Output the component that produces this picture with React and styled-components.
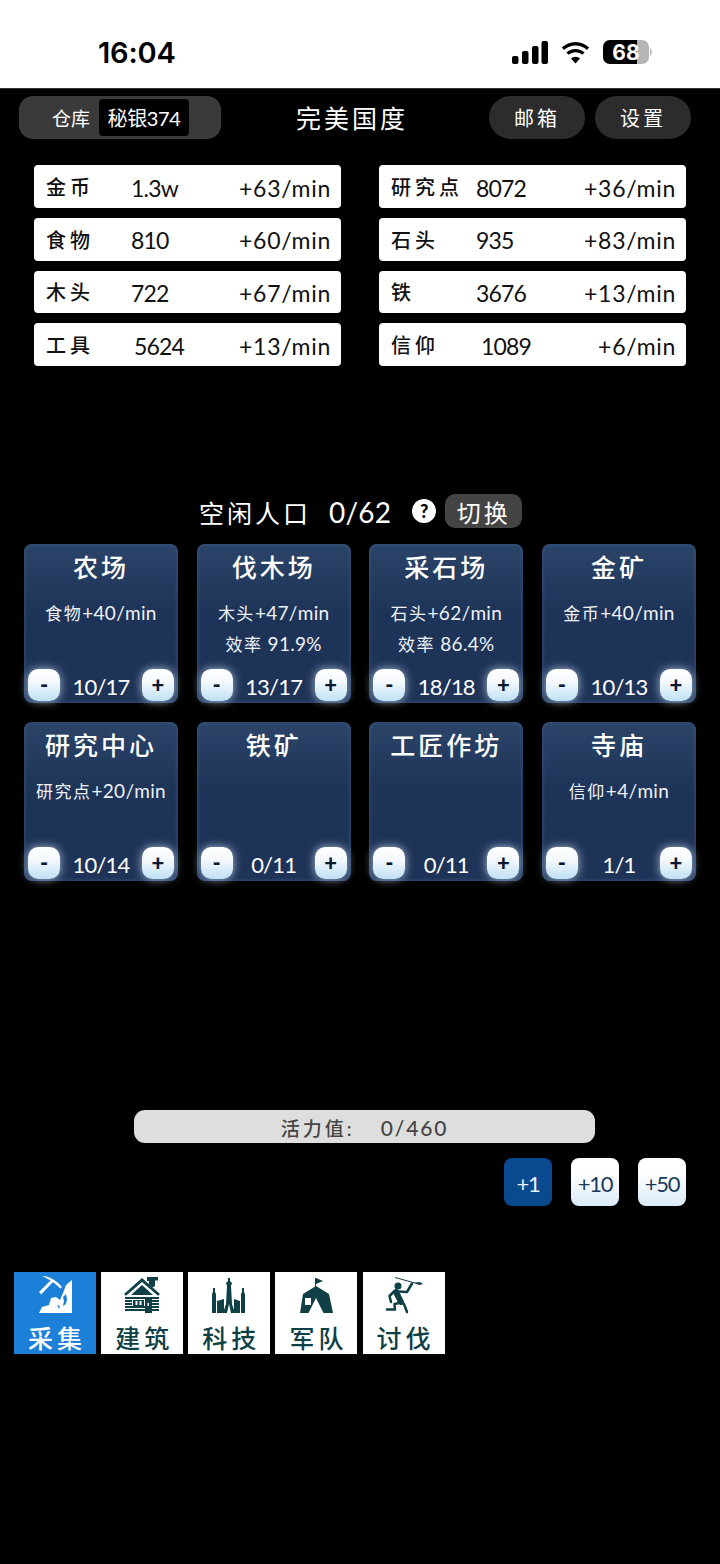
import styled, { createGlobalStyle } from 'styled-components';

const CJK = `'Lato', 'Noto Sans CJK SC', sans-serif`;

const GlobalStyle = createGlobalStyle`
  html, body {
    margin: 0;
    padding: 0;
    background: #000;
  }
  * {
    box-sizing: border-box;
  }
  #root {
    width: 720px;
    height: 1564px;
    overflow: hidden;
  }
`;

const Page = styled.div`
  width: 720px;
  height: 1564px;
  background: #000;
  font-family: ${CJK};
  color: #fff;
`;

const StatusBar = styled.div`
  height: 88px;
  background: #fff;
  color: #000;
  display: flex;
  align-items: center;
  justify-content: space-between;
  padding: 16px 68px 0 98px;
`;

const Clock = styled.div`
  font-family: 'Inter', sans-serif;
  font-size: 29px;
  font-weight: 600;
  letter-spacing: -0.2px;
`;

const StatusIcons = styled.div`
  display: flex;
  align-items: center;
  gap: 12px;
`;

const TopBar = styled.div`
  height: 50px;
  padding: 7px 29px 0 19px;
  display: flex;
  align-items: flex-start;
  justify-content: space-between;
  border-top: 1px solid #333;
`;

const Warehouse = styled.div`
  width: 202px;
  height: 43px;
  border-radius: 14px;
  background: #3a3a3a;
  display: flex;
  align-items: center;
  padding-left: 33px;
  gap: 9px;
  font-size: 19px;
`;

const Silver = styled.span`
  background: #000;
  border-radius: 4px;
  height: 37px;
  width: 90px;
  display: flex;
  align-items: center;
  justify-content: center;
  font-size: 20px;
  letter-spacing: -0.4px;
  white-space: nowrap;
`;

const KingdomName = styled.div`
  font-size: 25px;
  letter-spacing: 3px;
  line-height: 45px;
  margin-right: 6px;
`;

const TopActions = styled.div`
  display: flex;
  gap: 10px;
`;

const PillButton = styled.div`
  width: 96px;
  height: 43px;
  border-radius: 22px;
  background: #2c2c2c;
  display: flex;
  align-items: center;
  justify-content: center;
  font-size: 20px;
  letter-spacing: 3px;
`;

const ResourceGrid = styled.div`
  display: grid;
  grid-template-columns: 307px 307px;
  justify-content: space-between;
  row-gap: 10px;
  padding: 27.33px 34px 0;
`;

const ResourceRow = styled.div`
  height: 42.67px;
  background: #fff;
  border-radius: 4px;
  color: #111;
  display: flex;
  align-items: center;
  padding: 2px 10px 0 12px;
  font-size: 23px;
`;

const ResourceName = styled.span`
  font-size: 20px;
  font-weight: 500;
  letter-spacing: 4px;
  width: 85px;
  margin-top: -2px;
  white-space: nowrap;
`;

const ResourceAmount = styled.span`
  flex: 1;
  padding-left: ${({ $pad }) => $pad || 0}px;
  letter-spacing: -0.8px;
`;

const ResourceRate = styled.span`
  letter-spacing: 0.7px;
`;

const Population = styled.div`
  margin-top: 128px;
  height: 36px;
  display: flex;
  align-items: center;
  padding-left: 199px;
  font-size: 25px;
`;

const PopLabel = styled.span`
  letter-spacing: 3px;
  white-space: nowrap;
`;

const PopValue = styled.span`
  margin-left: 18px;
  font-size: 28px;
  letter-spacing: 0.2px;
`;

const HelpDot = styled.span`
  width: 24px;
  height: 24px;
  margin: -2px 0 0 21px;
  border-radius: 50%;
  background: #fff;
  color: #000;
  font-size: 18px;
  font-weight: 900;
  display: flex;
  align-items: center;
  justify-content: center;
`;

const SwitchButton = styled.span`
  width: 77px;
  height: 34px;
  margin: -1px 0 0 9px;
  border-radius: 10px;
  background: #444;
  display: flex;
  align-items: center;
  justify-content: center;
  font-size: 24px;
  letter-spacing: 3px;
`;

const BuildingGrid = styled.div`
  display: grid;
  grid-template-columns: repeat(4, 154px);
  justify-content: space-between;
  row-gap: 19px;
  padding: 14px 24px 0;
`;

const BuildingCard = styled.div`
  height: 159px;
  border-radius: 8px;
  background: linear-gradient(180deg, #2b4468 0%, #1d3358 45%, #1f3358 100%);
  box-shadow: inset 0 0 4px #3a5a85;
  display: flex;
  flex-direction: column;
  align-items: center;
  position: relative;
`;

const BuildingName = styled.div`
  font-size: 25px;
  letter-spacing: 3px;
  margin-top: 6px;
  line-height: 34px;
  font-weight: 500;
`;

const BuildingStat = styled.div`
  font-size: 19px;
  letter-spacing: 0.3px;
  line-height: 30px;
  color: #eef2f7;
  white-space: nowrap;
  ${BuildingName} + & {
    margin-top: 14px;
  }
`;

const StatSmall = styled.span`
  font-size: 17px;
  letter-spacing: 1.5px;
`;

const Stepper = styled.div`
  margin-top: auto;
  width: 100%;
  height: 32px;
  margin-bottom: 2px;
  padding: 0 4px;
  display: flex;
  align-items: center;
  justify-content: space-between;
`;

const StepCount = styled.span`
  font-size: 22px;
  letter-spacing: -0.8px;
  padding-top: 3px;
`;

const StepButton = styled.div`
  width: 32px;
  height: 32px;
  border-radius: 10px;
  background: linear-gradient(180deg, #ffffff 0%, #f4f9fd 40%, #bfe0f5 100%);
  box-shadow: 0 0 10px rgba(215, 238, 255, 0.75);
  color: #0c1830;
  font-weight: 900;
  font-size: 22px;
  display: flex;
  align-items: center;
  justify-content: center;
`;

const EnergyBar = styled.div`
  width: 461px;
  height: 33px;
  margin: 229px 0 0 134px;
  padding-top: 3px;
  border-radius: 11px;
  background: #dedede;
  color: #444;
  display: flex;
  align-items: center;
  justify-content: center;
  gap: 20px;
  font-size: 21px;
  font-weight: 500;
  white-space: nowrap;
`;

const EnergyLabel = styled.span`
  font-size: 19px;
  letter-spacing: 3px;
  width: 80px;
`;

const EnergyValue = styled.span`
  letter-spacing: 1.8px;
`;

const MultiplierRow = styled.div`
  display: flex;
  justify-content: flex-end;
  gap: 19px;
  padding: 15px 34px 0 0;
`;

const MultiplierButton = styled.div`
  width: 48px;
  height: 48px;
  padding-top: 3px;
  border-radius: 8px;
  background: ${({ $active }) =>
    $active ? 'linear-gradient(180deg, #0b4a92, #08498c)' : 'linear-gradient(180deg, #ffffff 30%, #dbebf8 100%)'};
  color: ${({ $active }) => ($active ? '#e8f1fa' : '#1d3a5c')};
  font-size: 22px;
  letter-spacing: -1.2px;
  display: flex;
  align-items: center;
  justify-content: center;
`;

const TabBar = styled.div`
  display: flex;
  gap: 5.15px;
  padding: 66px 0 0 14px;
`;

const Tab = styled.div`
  width: 82px;
  height: 82px;
  background: ${({ $active }) => ($active ? '#1c7fd8' : '#fff')};
  color: ${({ $active }) => ($active ? '#fff' : '#0f4046')};
  display: flex;
  flex-direction: column;
  align-items: center;
`;

const TabIcon = styled.svg`
  width: 40px;
  height: 40px;
  margin-top: 4px;
  fill: currentColor;
  flex: none;
`;

const TabLabel = styled.div`
  font-size: 25px;
  font-weight: 500;
  letter-spacing: 4px;
  line-height: 32px;
  margin-top: 6px;
  padding-left: 4px;
`;

const Signal = () => (
  <svg width="36" height="23" viewBox="0 0 36 23" fill="#000">
    <rect x="0" y="15" width="6.5" height="8" rx="2" />
    <rect x="10" y="10" width="6.5" height="13" rx="2" />
    <rect x="20" y="5" width="6.5" height="18" rx="2" />
    <rect x="29.5" y="0" width="6.5" height="23" rx="2" />
  </svg>
);

const Wifi = () => (
  <svg width="31" height="23" viewBox="0 0 31 23" fill="#000">
    <path d="M15.5 4.4c4.4 0 8.4 1.700 11.400 4.500l2.200-2.300C25.500 3.200 20.800 1 15.500 1S5.500 3.200 1.900 6.600l2.200 2.300c3-2.800 7-4.500 11.400-4.500z" />
    <path d="M15.500 11.200c2.600 0 5 1 6.800 2.600l2.300-2.300c-2.400-2.200-5.600-3.600-9.100-3.600s-6.700 1.400-9.100 3.600l2.300 2.300c1.800-1.600 4.200-2.600 6.800-2.600z" />
    <path d="M15.500 22.500l4.500-5c-1.200-1-2.800-1.700-4.500-1.700s-3.300.7-4.500 1.700z" />
  </svg>
);

const Battery = () => (
  <svg width="49" height="24" viewBox="0 0 49 24">
    <rect x="0" y="0" width="46" height="24" rx="7" fill="#b5b5b5" />
    <path d="M7 0h27v24H7a7 7 0 0 1-7-7V7a7 7 0 0 1 7-7z" fill="#000" />
    <path d="M47 8c1.200.5 2 2 2 4s-.8 3.500-2 4z" fill="#c4c4c4" />
    <text x="23" y="19.500" textAnchor="middle" fontFamily="Inter, sans-serif" fontSize="21" fontWeight="700" fill="#fff">
      68
    </text>
  </svg>
);

const GatherIcon = () => (
  <TabIcon viewBox="0 0 40 40">
    <path d="M4 16 17 3l2 2L6 18.500z" />
    <path d="M7 0c7 0 14 4 20 11l-1.500 1.500C20 7 14 3 7 0z" />
    <path d="M4 37l3-6 7-2 2-7 5-1 4 3 3-7 3-8 6-5v33z" />
    <path d="M28 21l3-3 1 5-1 5-3 2 1-5zM22 29l3 1-1 3z" fill="#1c7fd8" />
  </TabIcon>
);

const BuildIcon = () => (
  <TabIcon viewBox="0 0 40 40">
    <path d="M25 1h11v3.500h-3V10l-2.500 1.500L27 8.500V5h-2z" />
    <path d="M20 2 38 18l-2 1.800L20 6 4 19.800 2 18z" />
    <path d="M20 9l11 10H9zM14 14h12v1H14zM12 17h16v1H12z" />
    <path d="M3 21h34v2H3zM3 24h7v2H3zM30 24h7v2h-7zM3 27h7v2H3zM30 27h7v2h-7zM3 30h34v2H3zM3 33h34v2H3z" />
    <path d="M11 24h11v6H11zM23 23h7v14h-7z" />
    <path d="M13.500 25h2v4h-2zM17.500 25h2v4h-2zM25.500 27h1.500v3h-1.500z" fill="#fff" />
  </TabIcon>
);

const TechIcon = () => (
  <TabIcon viewBox="0 0 40 40">
    <path d="M19 2h2v3l2 2-1 3 1 18 3 9h-4l-2-9-2 9h-4l3-9 1-18-1-3 2-2z" />
    <path d="M4 12h2v4l1 2v19H3V18l1-2zM33 12h2v4l1 2v19h-4V18l1-2z" />
    <path d="M8 25l7-2v14H8zM25 23l6 2v12h-6z" />
  </TabIcon>
);

const ArmyIcon = () => (
  <TabIcon viewBox="0 0 40 40">
    <path d="M19 2h1v9h-1z" />
    <path d="M20 2l7 3-7 3z" />
    <path
      d="M20 10 33 18l4 19H27.500L20 22 12.500 37H4l3-19zM9 22v7h6v-7z"
      fillRule="evenodd"
    />
  </TabIcon>
);

const RaidIcon = () => (
  <TabIcon viewBox="0 0 40 40">
    <path d="M11 1 31 6.500l5-.5 3 2-3.500 1-4.500-1.500L11 2z" />
    <circle cx="14" cy="10" r="3.500" />
    <g fill="none" stroke="currentColor" strokeLinecap="round" strokeLinejoin="round">
      <path d="M12 16 17 26" strokeWidth="6" />
      <path d="M14 15.500 23 16 28 7.500" strokeWidth="2.500" />
      <path d="M10 15.500 5.500 20 7 26" strokeWidth="2.500" />
      <path d="M15 27 10.500 28 11 33.500 3 33.500" strokeWidth="2.500" />
      <path d="M16 26 20 28 23 36" strokeWidth="2.500" />
    </g>
  </TabIcon>
);

const resources = [
  ['金币', '1.3w', '+63/min', 0],
  ['研究点', '8072', '+36/min', 0],
  ['食物', '810', '+60/min', 0],
  ['石头', '935', '+83/min', 0],
  ['木头', '722', '+67/min', 0],
  ['铁', '3676', '+13/min', 0],
  ['工具', '5624', '+13/min', 3],
  ['信仰', '1089', '+6/min', 5],
];

const buildings = [
  { name: '农场', label: '食物', rate: '+40/min', count: '10/17' },
  { name: '伐木场', label: '木头', rate: '+47/min', eff: '91.9%', count: '13/17' },
  { name: '采石场', label: '石头', rate: '+62/min', eff: '86.4%', count: '18/18' },
  { name: '金矿', label: '金币', rate: '+40/min', count: '10/13' },
  { name: '研究中心', label: '研究点', rate: '+20/min', count: '10/14' },
  { name: '铁矿', count: '0/11' },
  { name: '工匠作坊', count: '0/11' },
  { name: '寺庙', label: '信仰', rate: '+4/min', count: '1/1' },
];

const tabs = [
  { label: '采集', Icon: GatherIcon, active: true },
  { label: '建筑', Icon: BuildIcon },
  { label: '科技', Icon: TechIcon },
  { label: '军队', Icon: ArmyIcon },
  { label: '讨伐', Icon: RaidIcon },
];

const App = () => (
  <Page>
    <GlobalStyle />
    <StatusBar>
      <Clock>16:04</Clock>
      <StatusIcons>
        <Signal />
        <Wifi />
        <Battery />
      </StatusIcons>
    </StatusBar>

    <TopBar>
      <Warehouse>
        仓库
        <Silver>秘银374</Silver>
      </Warehouse>
      <KingdomName>完美国度</KingdomName>
      <TopActions>
        <PillButton>邮箱</PillButton>
        <PillButton>设置</PillButton>
      </TopActions>
    </TopBar>

    <ResourceGrid>
      {resources.map(([name, amount, rate, pad]) => (
        <ResourceRow key={name}>
          <ResourceName>{name}</ResourceName>
          <ResourceAmount $pad={pad}>{amount}</ResourceAmount>
          <ResourceRate>{rate}</ResourceRate>
        </ResourceRow>
      ))}
    </ResourceGrid>

    <Population>
      <PopLabel>空闲人口</PopLabel>
      <PopValue>0/62</PopValue>
      <HelpDot>?</HelpDot>
      <SwitchButton>切换</SwitchButton>
    </Population>

    <BuildingGrid>
      {buildings.map((b) => (
        <BuildingCard key={b.name}>
          <BuildingName>{b.name}</BuildingName>
          {b.rate && (
            <BuildingStat>
              <StatSmall>{b.label}</StatSmall>
              {b.rate}
            </BuildingStat>
          )}
          {b.eff && (
            <BuildingStat>
              <StatSmall>效率</StatSmall> {b.eff}
            </BuildingStat>
          )}
          <Stepper>
            <StepButton>-</StepButton>
            <StepCount>{b.count}</StepCount>
            <StepButton>+</StepButton>
          </Stepper>
        </BuildingCard>
      ))}
    </BuildingGrid>

    <EnergyBar>
      <EnergyLabel>活力值:</EnergyLabel>
      <EnergyValue>0/460</EnergyValue>
    </EnergyBar>

    <MultiplierRow>
      <MultiplierButton $active>+1</MultiplierButton>
      <MultiplierButton>+10</MultiplierButton>
      <MultiplierButton>+50</MultiplierButton>
    </MultiplierRow>

    <TabBar>
      {tabs.map(({ label, Icon, active }) => (
        <Tab key={label} $active={active}>
          <Icon />
          <TabLabel>{label}</TabLabel>
        </Tab>
      ))}
    </TabBar>
  </Page>
);

export default App;
